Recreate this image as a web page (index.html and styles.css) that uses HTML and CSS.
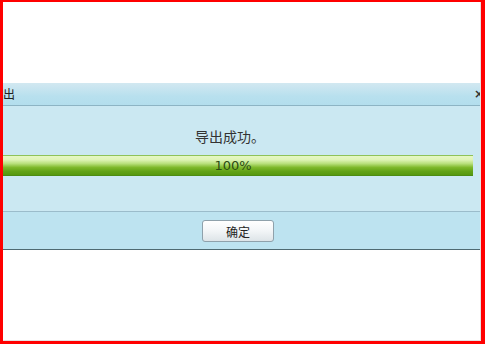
FILE: index.html
```html
<!DOCTYPE html>
<html lang="zh">
<head>
<meta charset="utf-8">
<title>导出</title>
<link rel="stylesheet" href="styles.css">
</head>
<body>
<div class="frame">
  <div class="inner">
    <div class="dialog">
      <div class="titlebar">
        <span class="title">导出</span>
        <span class="close">×</span>
      </div>
      <div class="content">
        <div class="message">导出成功。</div>
        <div class="progress"><span class="pct">100%</span></div>
      </div>
      <div class="footer">
        <button class="btn" type="button">确定</button>
      </div>
    </div>
  </div>
</div>
</body>
</html>
```

FILE: styles.css
```css
html, body {
  margin: 0;
  padding: 0;
  background: #ffffff;
}
body {
  font-family: "Noto Sans CJK SC", "Liberation Sans", sans-serif;
}
.frame {
  width: 485px;
  height: 344px;
  box-sizing: border-box;
  border-style: solid;
  border-color: #ff0000;
  border-width: 2px 4px 3px 3px;
  overflow: hidden;
}
.inner {
  height: 100%;
  box-sizing: border-box;
  border-right: 1px solid #e2e2e2;
  border-bottom: 1px solid #e2e2e2;
  padding-top: 81px;
  overflow: hidden;
}
.dialog {
  width: 502px;
  margin-left: -16px;
}
.titlebar {
  height: 22px;
  border-bottom: 1px solid #8db4c4;
  background: linear-gradient(#d2e8f1, #b8e0ee 60%, #b3deed);
  display: flex;
  align-items: center;
  justify-content: space-between;
  padding: 0 7px 0 4px;
}
.title {
  font-size: 12px;
  color: #222;
  line-height: 22px;
}
.close {
  font-family: "DejaVu Sans", sans-serif;
  font-size: 12px;
  font-weight: bold;
  color: #333;
  line-height: 22px;
  margin-right: -2px;
}
.content {
  background: #cbe8f2;
  height: 105px;
  box-sizing: border-box;
  padding-top: 20px;
}
.message {
  text-align: center;
  font-size: 14px;
  line-height: 20px;
  color: #333;
  margin-left: -16px;
}
.progress {
  margin: 9px 16px 0 16px;
  height: 21px;
  box-sizing: border-box;
  border-top: 1px solid #8fc25a;
  border-bottom: 1px solid #4c8c12;
  background: linear-gradient(#e6f7c4 0%, #dff4b6 20%, #b8e07c 40%, #7fb92c 60%, #62a317 80%, #56980f 100%);
  display: flex;
  align-items: center;
  justify-content: center;
}
.pct {
  font-family: "DejaVu Sans", "Liberation Sans", sans-serif;
  font-size: 13px;
  color: #2b4a14;
  margin-left: -10px;
}
.footer {
  background: #bde3f0;
  border-top: 1px solid #9bbccb;
  border-bottom: 1px solid #4f6a72;
  height: 37px;
  display: flex;
  align-items: center;
  justify-content: center;
}
.btn {
  width: 72px;
  height: 22px;
  margin-top: 1px;
  border: 1px solid #8fa1ab;
  border-radius: 3px;
  background: linear-gradient(#ffffff, #f2f5f7 50%, #dde4e8);
  font-family: "Noto Sans CJK SC", sans-serif;
  font-size: 12px;
  color: #222;
  padding: 0;
}
```
